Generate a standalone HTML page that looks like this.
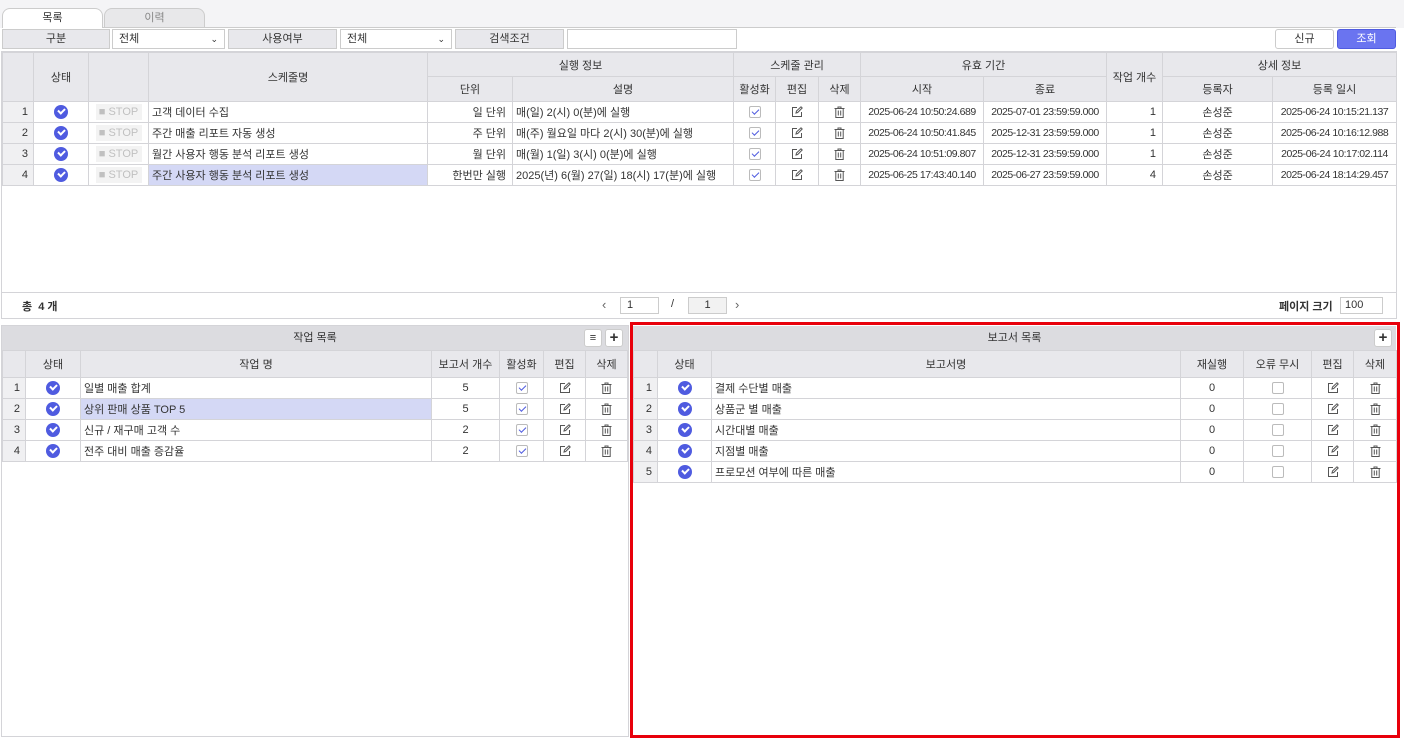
<!DOCTYPE html>
<html><head><meta charset="utf-8">
<style>
*{box-sizing:border-box;margin:0;padding:0}
body{width:1404px;height:740px;background:#fff;font-family:"Liberation Sans","Noto Sans CJK KR",sans-serif;font-size:11px;color:#333;position:relative;overflow:hidden}
.a{position:absolute}
table{border-collapse:collapse;table-layout:fixed;position:absolute}
td,th{border:1px solid #d4d4d8;height:21px;font-weight:normal;text-align:center;white-space:nowrap;overflow:hidden;padding:0 3px}
th{background:#e8e8ec;color:#333}
td.n{background:#f0f0f2;text-align:right;padding-right:5px}
td.l{text-align:left}
td.r{text-align:right;padding-right:6px}
td.d{font-size:10.5px;letter-spacing:-0.45px;padding:0 2px}
td.sel{background:#d4d8f5}
.ck{display:inline-block;width:14px;height:14px;border-radius:50%;background:#4f5be0;vertical-align:middle;position:relative}
.ck:after{content:"";position:absolute;left:4px;top:3px;width:5px;height:3px;border-left:2px solid #fff;border-bottom:2px solid #fff;transform:rotate(-45deg)}
.cb{display:inline-block;width:12px;height:12px;border:1px solid #bbb;border-radius:2px;vertical-align:middle;position:relative;background:#fff}
.cb.on:after{content:"";position:absolute;left:2px;top:2px;width:6px;height:3px;border-left:1.5px solid #4f5be0;border-bottom:1.5px solid #4f5be0;transform:rotate(-45deg)}
svg{vertical-align:middle}
.stop{display:inline-block;background:#f3f3f3;color:#c0c0c0;width:46px;height:16px;line-height:16px;font-size:11px}
.btn{position:absolute;border:1px solid #ccc;border-radius:3px;background:#fff;text-align:center}
</style></head><body>
<div class="a" style="left:0;top:0;width:1404px;height:28px;background:#f4f4f6"></div>
<div class="a" style="left:2px;top:27px;width:1394px;height:1px;background:#ccc"></div>
<div class="a" style="left:2px;top:8px;width:101px;height:20px;background:#fff;border:1px solid #ccc;border-bottom:none;border-radius:8px 8px 0 0;text-align:center;line-height:18px">목록</div>
<div class="a" style="left:104px;top:8px;width:101px;height:19px;background:#e8e8ea;border:1px solid #ccc;border-bottom:none;border-radius:8px 8px 0 0;text-align:center;line-height:18px;color:#888">이력</div>
<div class="a" style="left:2px;top:29px;width:108px;height:20px;background:#e8e8ec;border:1px solid #ccc;text-align:center;line-height:18px">구분</div>
<div class="a" style="left:112px;top:29px;width:113px;height:20px;border:1px solid #ccc;line-height:18px;padding-left:6px">전체<span style="position:absolute;right:6px;font-size:9px">⌄</span></div>
<div class="a" style="left:228px;top:29px;width:109px;height:20px;background:#e8e8ec;border:1px solid #ccc;text-align:center;line-height:18px">사용여부</div>
<div class="a" style="left:340px;top:29px;width:112px;height:20px;border:1px solid #ccc;line-height:18px;padding-left:6px">전체<span style="position:absolute;right:6px;font-size:9px">⌄</span></div>
<div class="a" style="left:455px;top:29px;width:109px;height:20px;background:#e8e8ec;border:1px solid #ccc;text-align:center;line-height:18px">검색조건</div>
<div class="a" style="left:567px;top:29px;width:170px;height:20px;border:1px solid #ccc"></div>
<div class="btn" style="left:1275px;top:29px;width:59px;height:20px;line-height:18px">신규</div>
<div class="btn" style="left:1337px;top:29px;width:59px;height:20px;line-height:18px;background:#6a74f0;border-color:#4f5be0;color:#fff">조회</div>
<div class="a" style="left:1px;top:51px;width:1396px;height:268px;border:1px solid #d4d4d8"></div>
<table style="left:2px;top:52px;width:1394px">
<colgroup><col style="width:31px"><col style="width:55px"><col style="width:60px"><col style="width:279px"><col style="width:85px"><col style="width:221px"><col style="width:42px"><col style="width:43px"><col style="width:42px"><col style="width:123px"><col style="width:123px"><col style="width:56px"><col style="width:110px"><col style="width:124px"></colgroup>
<tr style="height:24px"><th rowspan="2"></th><th rowspan="2">상태</th><th rowspan="2"></th><th rowspan="2" style="border-left:1px solid #999">스케줄명</th><th colspan="2">실행 정보</th><th colspan="3">스케줄 관리</th><th colspan="2">유효 기간</th><th rowspan="2">작업 개수</th><th colspan="2">상세 정보</th></tr>
<tr style="height:25px"><th>단위</th><th>설명</th><th>활성화</th><th>편집</th><th>삭제</th><th>시작</th><th>종료</th><th>등록자</th><th>등록 일시</th></tr>
<tr><td class="n">1</td><td><span class="ck"></span></td><td><span class="stop">■ STOP</span></td><td class="l" style="border-left:1px solid #999">고객 데이터 수집</td><td class="r">일 단위</td><td class="l">매(일) 2(시) 0(분)에 실행</td><td><span class="cb on"></span></td><td>ED</td><td>TR</td><td class="d">2025-06-24 10:50:24.689</td><td class="d">2025-07-01 23:59:59.000</td><td class="r">1</td><td>손성준</td><td class="d">2025-06-24 10:15:21.137</td></tr>
<tr><td class="n">2</td><td><span class="ck"></span></td><td><span class="stop">■ STOP</span></td><td class="l" style="border-left:1px solid #999">주간 매출 리포트 자동 생성</td><td class="r">주 단위</td><td class="l">매(주) 월요일 마다 2(시) 30(분)에 실행</td><td><span class="cb on"></span></td><td>ED</td><td>TR</td><td class="d">2025-06-24 10:50:41.845</td><td class="d">2025-12-31 23:59:59.000</td><td class="r">1</td><td>손성준</td><td class="d">2025-06-24 10:16:12.988</td></tr>
<tr><td class="n">3</td><td><span class="ck"></span></td><td><span class="stop">■ STOP</span></td><td class="l" style="border-left:1px solid #999">월간 사용자 행동 분석 리포트 생성</td><td class="r">월 단위</td><td class="l">매(월) 1(일) 3(시) 0(분)에 실행</td><td><span class="cb on"></span></td><td>ED</td><td>TR</td><td class="d">2025-06-24 10:51:09.807</td><td class="d">2025-12-31 23:59:59.000</td><td class="r">1</td><td>손성준</td><td class="d">2025-06-24 10:17:02.114</td></tr>
<tr><td class="n">4</td><td><span class="ck"></span></td><td><span class="stop">■ STOP</span></td><td class="l sel" style="border-left:1px solid #999">주간 사용자 행동 분석 리포트 생성</td><td class="r">한번만 실행</td><td class="l">2025(년) 6(월) 27(일) 18(시) 17(분)에 실행</td><td><span class="cb on"></span></td><td>ED</td><td>TR</td><td class="d">2025-06-25 17:43:40.140</td><td class="d">2025-06-27 23:59:59.000</td><td class="r">4</td><td>손성준</td><td class="d">2025-06-24 18:14:29.457</td></tr>
</table>
<div class="a" style="left:2px;top:292px;width:1394px;height:1px;background:#d4d4d8"></div>
<div class="a" style="left:22px;top:298px;font-weight:bold">총 &nbsp;4 개</div>
<div class="a" style="left:602px;top:297px;font-size:13px;color:#666">‹</div>
<div class="a" style="left:620px;top:297px;width:39px;height:17px;border:1px solid #ccc;padding-left:6px;line-height:15px">1</div>
<div class="a" style="left:671px;top:298px">/</div>
<div class="a" style="left:688px;top:297px;width:39px;height:17px;border:1px solid #ccc;background:#f2f2f2;text-align:center;line-height:15px">1</div>
<div class="a" style="left:735px;top:297px;font-size:13px;color:#666">›</div>
<div class="a" style="left:1279px;top:298px;font-weight:bold">페이지 크기</div>
<div class="a" style="left:1340px;top:297px;width:43px;height:17px;border:1px solid #ccc;padding-left:4px;line-height:15px">100</div>
<div class="a" style="left:1px;top:325px;width:628px;height:412px;border:1px solid #d4d4d8"></div>
<div class="a" style="left:2px;top:326px;width:626px;height:24px;background:#dcdce0;text-align:center;line-height:24px">작업 목록</div>
<div class="btn" style="left:584px;top:329px;width:18px;height:18px;line-height:16px;font-size:11px">≡</div>
<div class="btn" style="left:605px;top:329px;width:18px;height:18px;line-height:15px;font-size:15px;font-weight:bold">+</div>
<table style="left:2px;top:350px;width:625px">
<colgroup><col style="width:23px"><col style="width:55px"><col style="width:351px"><col style="width:68px"><col style="width:44px"><col style="width:42px"><col style="width:42px"></colgroup>
<tr style="height:27px"><th></th><th>상태</th><th>작업 명</th><th>보고서 개수</th><th>활성화</th><th>편집</th><th>삭제</th></tr>
<tr><td class="n">1</td><td><span class="ck"></span></td><td class="l">일별 매출 합계</td><td>5</td><td><span class="cb on"></span></td><td>ED</td><td>TR</td></tr>
<tr><td class="n">2</td><td><span class="ck"></span></td><td class="l sel">상위 판매 상품 TOP 5</td><td>5</td><td><span class="cb on"></span></td><td>ED</td><td>TR</td></tr>
<tr><td class="n">3</td><td><span class="ck"></span></td><td class="l">신규 / 재구매 고객 수</td><td>2</td><td><span class="cb on"></span></td><td>ED</td><td>TR</td></tr>
<tr><td class="n">4</td><td><span class="ck"></span></td><td class="l">전주 대비 매출 증감율</td><td>2</td><td><span class="cb on"></span></td><td>ED</td><td>TR</td></tr>
</table>
<div class="a" style="left:630px;top:322px;width:770px;height:416px;border:3px solid #e8000b"></div>
<div class="a" style="left:633px;top:326px;width:763px;height:24px;background:#dcdce0;text-align:center;line-height:24px">보고서 목록</div>
<div class="btn" style="left:1374px;top:329px;width:18px;height:18px;line-height:15px;font-size:15px;font-weight:bold">+</div>
<table style="left:633px;top:350px;width:763px">
<colgroup><col style="width:24px"><col style="width:54px"><col style="width:469px"><col style="width:63px"><col style="width:68px"><col style="width:42px"><col style="width:43px"></colgroup>
<tr style="height:27px"><th></th><th>상태</th><th>보고서명</th><th>재실행</th><th>오류 무시</th><th>편집</th><th>삭제</th></tr>
<tr><td class="n">1</td><td><span class="ck"></span></td><td class="l">결제 수단별 매출</td><td>0</td><td><span class="cb"></span></td><td>ED</td><td>TR</td></tr>
<tr><td class="n">2</td><td><span class="ck"></span></td><td class="l">상품군 별 매출</td><td>0</td><td><span class="cb"></span></td><td>ED</td><td>TR</td></tr>
<tr><td class="n">3</td><td><span class="ck"></span></td><td class="l">시간대별 매출</td><td>0</td><td><span class="cb"></span></td><td>ED</td><td>TR</td></tr>
<tr><td class="n">4</td><td><span class="ck"></span></td><td class="l">지점별 매출</td><td>0</td><td><span class="cb"></span></td><td>ED</td><td>TR</td></tr>
<tr><td class="n">5</td><td><span class="ck"></span></td><td class="l">프로모션 여부에 따른 매출</td><td>0</td><td><span class="cb"></span></td><td>ED</td><td>TR</td></tr>
</table>
<script>
var ed='<svg width="12" height="12" viewBox="0 0 12 12" fill="none" stroke="#555" stroke-width="1"><path d="M6 1.5H1.5v9h9V6"/><path d="M5 7l0.5-2L10 0.8l1.2 1.2L6.7 6.5z"/></svg>';
var tr='<svg width="11" height="12" viewBox="0 0 11 12" fill="none" stroke="#555" stroke-width="1"><path d="M0.5 2.5h10M4 2.5V1h3v1.5M1.8 2.5v9h7.4v-9M4.3 4.5v5M6.7 4.5v5"/></svg>';
document.querySelectorAll('td').forEach(function(t){if(t.textContent==='ED')t.innerHTML=ed;else if(t.textContent==='TR')t.innerHTML=tr;});
</script>
</body></html>
